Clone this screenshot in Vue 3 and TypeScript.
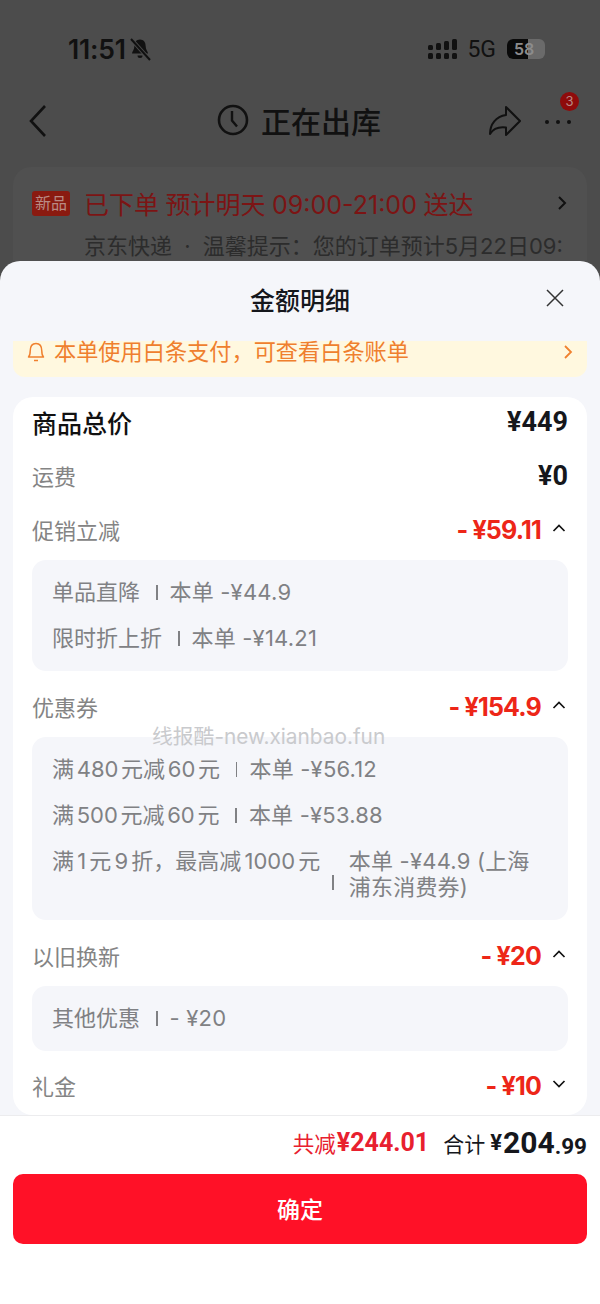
<script setup lang="ts">
interface Detail {
  name: string
  value: string
  tall?: boolean
}

interface Section {
  label: string
  amount: string
  details: Detail[]
}

const sections: Section[] = [
  {
    label: '促销立减',
    amount: '- ¥59.11',
    details: [
      { name: '单品直降', value: '本单 -¥44.9' },
      { name: '限时折上折', value: '本单 -¥14.21' },
    ],
  },
  {
    label: '优惠券',
    amount: '- ¥154.9',
    details: [
      { name: '满 480 元减 60 元', value: '本单 -¥56.12' },
      { name: '满 500 元减 60 元', value: '本单 -¥53.88' },
      { name: '满 1 元 9 折，最高减 1000 元', value: '本单 -¥44.9 (上海浦东消费券)', tall: true },
    ],
  },
  {
    label: '以旧换新',
    amount: '- ¥20',
    details: [{ name: '其他优惠', value: '- ¥20' }],
  },
]
</script>

<template>
  <div class="screen">
    <div class="backdrop">
      <div class="status">
        <div class="status-left">
          <span class="time">11:51</span>
          <svg class="mute" viewBox="0 0 24 24" width="24" height="24">
            <path d="M12 2.500c-3.600 0-5.600 2.800-5.600 6.300 0 4-2.400 6-2.400 7.700h16c0-1.700-2.400-3.700-2.400-7.700 0-3.500-2-6.300-5.600-6.300z" fill="#111" />
            <path d="M9.500 18.500h5a2.500 2.500 0 0 1-5 0z" fill="#111" />
            <path d="M3 2l19 21" stroke="#4c4c4c" stroke-width="4" />
            <path d="M3 2l19 21" stroke="#111" stroke-width="2" />
          </svg>
        </div>
        <div class="status-right">
          <svg viewBox="0 0 30 20" width="30" height="20">
            <g fill="#111">
              <rect x="0" y="6" width="5" height="5" rx="1.500" />
              <rect x="0" y="14" width="5" height="6" rx="1.500" />
              <rect x="8" y="4" width="5" height="7" rx="1.500" />
              <rect x="8" y="14" width="5" height="6" rx="1.500" />
              <rect x="16" y="2" width="5" height="9" rx="1.500" />
              <rect x="16" y="14" width="5" height="6" rx="1.500" />
              <rect x="24" y="0" width="5" height="11" rx="1.500" />
              <rect x="24" y="14" width="5" height="6" rx="1.500" />
            </g>
          </svg>
          <span class="net">5G</span>
          <div class="battery">
            <span class="battery-fill"></span>
            <span class="battery-num">58</span>
          </div>
        </div>
      </div>

      <div class="nav">
        <svg viewBox="0 0 20 34" width="20" height="34">
          <path d="M17 2L3 17l14 15" fill="none" stroke="#111" stroke-width="2.600" />
        </svg>
        <div class="nav-title">
          <svg viewBox="0 0 32 32" width="32" height="32">
            <circle cx="16" cy="16" r="14" fill="none" stroke="#111" stroke-width="2.600" />
            <path d="M15 7v9.500l5 6" fill="none" stroke="#111" stroke-width="2.400" />
          </svg>
          <span>正在出库</span>
        </div>
        <div class="nav-actions">
          <svg viewBox="0 0 34 32" width="34" height="32">
            <path d="M18 2l14 14-14 14v-7.500C10 21.500 5 24 2 29 2 19 8 11.500 18 10z" fill="none" stroke="#111" stroke-width="2" stroke-linejoin="round" />
          </svg>
          <div class="more">
            <svg viewBox="0 0 28 6" width="28" height="6">
              <circle cx="3" cy="3" r="2" fill="#111" />
              <circle cx="14" cy="3" r="2" fill="#111" />
              <circle cx="25" cy="3" r="2" fill="#111" />
            </svg>
            <span class="badge">3</span>
          </div>
        </div>
      </div>

      <div class="order-card">
        <div class="order-head">
          <span class="order-tag">新品</span>
          <span class="order-title">已下单 预计明天 09:00-21:00 送达</span>
          <svg viewBox="0 0 10 16" width="10" height="16">
            <path d="M2 2l6 6-6 6" fill="none" stroke="#111" stroke-width="2" />
          </svg>
        </div>
        <div class="order-note">京东快递 · 温馨提示：您的订单预计5月22日09:</div>
      </div>
    </div>

    <div class="sheet">
      <div class="sheet-head">
        <span class="sheet-title">金额明细</span>
        <svg class="close" viewBox="0 0 18 18" width="18" height="18">
          <path d="M1 1l16 16M17 1L1 17" stroke="#333" stroke-width="1.500" />
        </svg>
      </div>

      <div class="notice">
        <svg viewBox="0 0 18 22" width="18" height="22">
          <path d="M1.500 16c1.300-1.200 1.700-2.800 1.700-6C3.200 5.500 5.200 2.500 9 2.500s5.800 3 5.800 7.500c0 3.200.4 4.800 1.700 6z" fill="none" stroke="#f0812f" stroke-width="1.500" stroke-linejoin="round" />
          <path d="M7 19.500h4" stroke="#f0812f" stroke-width="1.500" />
        </svg>
        <span class="notice-text">本单使用白条支付，可查看白条账单</span>
        <svg class="notice-arrow" viewBox="0 0 10 16" width="10" height="16">
          <path d="M2 2l6 6-6 6" fill="none" stroke="#f0812f" stroke-width="1.800" />
        </svg>
      </div>

      <div class="card">
        <div class="row total">
          <span class="total-label">商品总价</span>
          <span class="total-value">¥449</span>
        </div>
        <div class="row freight">
          <span class="label">运费</span>
          <span class="total-value">¥0</span>
        </div>

        <div v-for="s in sections" :key="s.label" class="section">
          <div class="row">
            <span class="label">{{ s.label }}</span>
            <div class="amount-wrap">
              <span class="amount">{{ s.amount }}</span>
              <svg viewBox="0 0 14 10" width="14" height="10">
                <path d="M1.500 8L7 2.500 12.500 8" fill="none" stroke="#111" stroke-width="1.700" />
              </svg>
            </div>
          </div>
          <div class="details">
            <div v-for="d in s.details" :key="d.name" class="detail" :class="{ tall: d.tall }">
              <span class="detail-name">{{ d.name }}</span>
              <span class="sep"></span>
              <span class="detail-value">{{ d.value }}</span>
            </div>
          </div>
        </div>

        <div class="row gift">
          <span class="label">礼金</span>
          <div class="amount-wrap">
            <span class="amount">- ¥10</span>
            <svg viewBox="0 0 14 10" width="14" height="10">
              <path d="M1.500 2L7 7.500 12.500 2" fill="none" stroke="#111" stroke-width="1.700" />
            </svg>
          </div>
        </div>
      </div>

      <div class="footer">
        <div class="sums">
          <span class="saved">共减</span>
          <span class="saved-num">¥244.01</span>
          <span class="sum-label">合计</span>
          <span class="sum-yen">¥</span>
          <span class="sum-int">204</span>
          <span class="sum-dec">.99</span>
        </div>
        <button class="confirm" type="button">确定</button>
      </div>
    </div>

    <div class="watermark">线报酷-new.xianbao.fun</div>
  </div>
</template>

<style>
html,
body {
  margin: 0;
  background: #fff;
}
</style>

<style scoped>
.screen {
  position: relative;
  width: 600px;
  height: 1304px;
  overflow: hidden;
  display: flex;
  flex-direction: column;
  background: #4c4c4c;
  font-family: Inter, "Noto Sans CJK SC", sans-serif;
}

.backdrop {
  height: 261px;
  flex: none;
  overflow: hidden;
  box-sizing: border-box;
  padding-top: 37px;
  color: #111;
}

.status {
  height: 24px;
  display: flex;
  align-items: center;
  justify-content: space-between;
  padding: 0 55px 0 68px;
}

.status-left,
.status-right {
  display: flex;
  align-items: center;
}

.time {
  font-size: 26.500px;
  font-weight: 600;
  letter-spacing: -0.2px;
}

.mute {
  margin-left: 2px;
}

.net {
  font-size: 23px;
  margin: 0 11px 0 9px;
  font-family: Roboto, sans-serif;
}

.battery {
  position: relative;
  width: 38px;
  height: 20px;
  border-radius: 6px;
  background: #6a6a6a;
  overflow: hidden;
}

.battery-fill {
  position: absolute;
  left: 0;
  top: 0;
  bottom: 0;
  width: 21px;
  background: #0a0a0a;
}

.battery-num {
  position: absolute;
  left: 7px;
  top: 0;
  line-height: 20px;
  font-size: 16px;
  font-weight: 600;
  color: #8c8c8c;
}

.nav {
  height: 44px;
  margin-top: 38px;
  display: flex;
  align-items: center;
  justify-content: space-between;
  padding: 0 28px;
  position: relative;
}

.nav-title {
  position: absolute;
  left: 217px;
  top: -1px;
  height: 44px;
  display: flex;
  align-items: center;
  gap: 12px;
  font-size: 30px;
  font-weight: 500;
}

.nav-actions {
  display: flex;
  align-items: center;
  gap: 22px;
}

.more {
  position: relative;
  width: 28px;
  height: 6px;
  margin-top: 1px;
}

.more svg {
  display: block;
}

.badge {
  position: absolute;
  right: -7px;
  top: -27px;
  width: 19px;
  height: 19px;
  border-radius: 50%;
  background: #8f0b0b;
  color: #b98a84;
  font-size: 13px;
  line-height: 19px;
  text-align: center;
}

.order-card {
  margin: 24px 13px 0;
  height: 120px;
  box-sizing: border-box;
  padding: 21px 20px 0 19px;
  background: #505050;
  border-radius: 18px;
}

.order-head {
  display: flex;
  align-items: center;
  height: 30px;
}

.order-tag {
  width: 38px;
  height: 25px;
  border-radius: 3px;
  background: #8a1a10;
  color: #b98a84;
  font-size: 16px;
  line-height: 25px;
  text-align: center;
  flex: none;
}

.order-title {
  margin-left: 14px;
  flex: 1;
  color: #7c1414;
  font-size: 25px;
  word-spacing: -0.5px;
  white-space: nowrap;
}

.order-note {
  margin-top: 10px;
  padding-left: 52px;
  color: #2c2c2c;
  font-size: 22px;
  word-spacing: 6px;
  white-space: nowrap;
}

.sheet {
  flex: 1;
  display: flex;
  flex-direction: column;
  background: #f5f6fa;
  border-radius: 20px 20px 0 0;
}

.sheet-head {
  position: relative;
  height: 80px;
  box-sizing: border-box;
  padding-bottom: 4px;
  flex: none;
  display: flex;
  align-items: center;
  justify-content: center;
}

.sheet-title {
  font-size: 25px;
  font-weight: 500;
  color: #15171c;
}

.close {
  position: absolute;
  right: 36px;
  top: 28px;
}

.notice {
  flex: none;
  height: 36px;
  margin: 0 13px;
  box-sizing: border-box;
  padding: 0 14px;
  display: flex;
  align-items: flex-start;
  gap: 9px;
  background: #fff8df;
  border-radius: 0 0 12px 12px;
  color: #ef7f2e;
}

.notice-text {
  flex: 1;
  font-size: 22.200px;
  line-height: 22px;
}

.notice-arrow {
  margin-top: 3px;
}

.card {
  flex: none;
  height: 718px;
  margin: 20px 13px 0;
  box-sizing: border-box;
  padding: 0 19px;
  background: #fff;
  border-radius: 20px;
}

.row {
  display: flex;
  align-items: center;
  justify-content: space-between;
  height: 30px;
}

.total {
  padding-top: 10px;
}

.freight {
  margin-top: 24px;
}

.section {
  margin-top: 21px;
}

.freight + .section {
  margin-top: 24px;
}

.total-label {
  font-size: 25px;
  font-weight: 500;
  color: #111;
}

.total-value {
  font-size: 27px;
  font-weight: 700;
  color: #15171c;
  font-family: Roboto, sans-serif;
}

.label {
  font-size: 22px;
  color: #848484;
  margin-top: -2px;
}

.amount-wrap {
  display: flex;
  align-items: center;
  gap: 11px;
}

.amount-wrap svg {
  margin: -4px 2px 0 0;
}

.amount {
  font-size: 25px;
  font-weight: 700;
  letter-spacing: -0.8px;
  color: #ed2618;
}

.details {
  margin-top: 15px;
  padding: 16px 20px 17px;
  background: #f5f6fa;
  border-radius: 14px;
  display: flex;
  flex-direction: column;
  gap: 14px;
}

.detail {
  display: flex;
  align-items: flex-start;
  font-size: 22px;
  line-height: 26px;
  color: #808184;
}

.detail-name,
.detail-value {
  padding: 3px 0;
}

.detail-name {
  flex: none;
  word-spacing: -3.500px;
}

.detail-value {
  letter-spacing: 0.2px;
}

.sep {
  flex: none;
  align-self: center;
  width: 1.500px;
  height: 15px;
  margin: 0 12px 0 16px;
  background: #808184;
}

.tall .detail-name {
  word-spacing: -3px;
}

.tall .sep {
  margin: 16px 15px 0 12px;
}

.gift {
  margin-top: 20px;
}

.footer {
  flex: 1;
  background: #fff;
  border-top: 1px solid #ececee;
  padding: 0 13px;
}

.sums {
  height: 53px;
  display: flex;
  align-items: center;
  justify-content: flex-end;
}

.saved {
  font-size: 21.500px;
  color: #e8202e;
}

.saved-num {
  font-size: 25px;
  font-weight: 700;
  color: #e8202e;
  margin-left: 1px;
  font-family: Roboto, sans-serif;
}

.sum-label {
  margin-left: 14px;
  font-size: 21px;
  color: #15171c;
}

.sum-yen {
  margin-left: 5px;
  font-size: 22px;
  font-weight: 700;
  color: #15171c;
  font-family: Roboto, sans-serif;
}

.sum-int {
  margin-left: 1px;
  font-size: 30px;
  font-weight: 700;
  color: #15171c;
  font-family: Roboto, sans-serif;
}

.sum-dec {
  font-size: 22.500px;
  font-weight: 700;
  color: #15171c;
  font-family: Roboto, sans-serif;
  margin-top: 6px;
}

.confirm {
  display: block;
  width: 100%;
  height: 70px;
  margin-top: 5px;
  padding: 0 0 3px;
  border: 0;
  border-radius: 10px;
  background: #ff1127;
  color: #fff;
  font-family: inherit;
  font-size: 23px;
  font-weight: 500;
}

.watermark {
  position: absolute;
  left: 152px;
  top: 724px;
  font-size: 20.800px;
  line-height: 26px;
  color: #c9cacd;
  white-space: nowrap;
}
</style>
